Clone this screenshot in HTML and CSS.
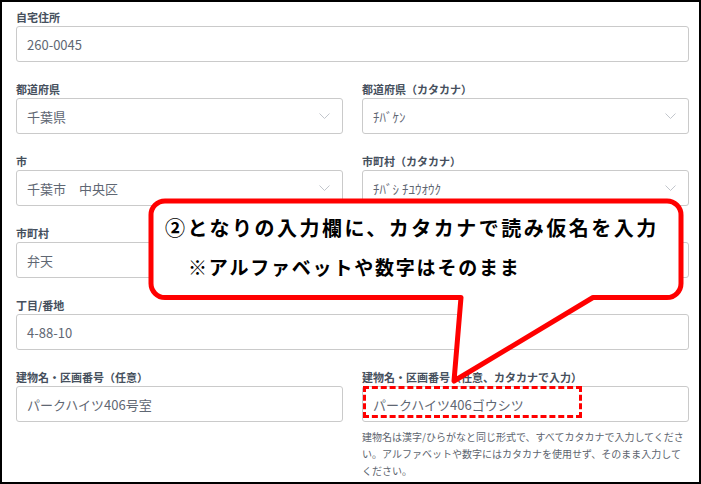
FILE: index.html
```html
<!DOCTYPE html>
<html lang="ja">
<head>
<meta charset="utf-8">
<title>住所入力</title>
<link rel="stylesheet" href="styles.css">
</head>
<body>
<div class="frame">
  <form class="form">
    <div class="field full">
      <div class="label">自宅住所</div>
      <div class="input">260-0045</div>
    </div>
    <div class="field">
      <div class="label">都道府県</div>
      <div class="input select">千葉県<svg class="chev" width="11" height="6" viewBox="0 0 11 6"><polyline points="0.5,0.5 5.5,5.5 10.5,0.5"/></svg></div>
    </div>
    <div class="field">
      <div class="label">都道府県（カタカナ）</div>
      <div class="input select">ﾁﾊﾞｹﾝ<svg class="chev" width="11" height="6" viewBox="0 0 11 6"><polyline points="0.5,0.5 5.5,5.5 10.5,0.5"/></svg></div>
    </div>
    <div class="field">
      <div class="label">市</div>
      <div class="input select">千葉市　中央区<svg class="chev" width="11" height="6" viewBox="0 0 11 6"><polyline points="0.5,0.5 5.5,5.5 10.5,0.5"/></svg></div>
    </div>
    <div class="field">
      <div class="label">市町村（カタカナ）</div>
      <div class="input select">ﾁﾊﾞｼ ﾁﾕｳｵｳｸ<svg class="chev" width="11" height="6" viewBox="0 0 11 6"><polyline points="0.5,0.5 5.5,5.5 10.5,0.5"/></svg></div>
    </div>
    <div class="field">
      <div class="label">市町村</div>
      <div class="input">弁天</div>
    </div>
    <div class="field">
      <div class="label">&nbsp;</div>
      <div class="input"></div>
    </div>
    <div class="field full">
      <div class="label">丁目/番地</div>
      <div class="input">4-88-10</div>
    </div>
    <div class="field">
      <div class="label">建物名・区画番号（任意）</div>
      <div class="input">パークハイツ406号室</div>
    </div>
    <div class="field">
      <div class="label">建物名・区画番号（任意、カタカナで入力）</div>
      <div class="input">パークハイツ406ゴウシツ</div>
      <p class="help">建物名は漢字/ひらがなと同じ形式で、すべてカタカナで入力してください。アルファベットや数字にはカタカナを使用せず、そのまま入力してください。</p>
    </div>
  </form>

  <svg class="callout-shape" width="701" height="484" viewBox="0 0 701 484">
    <path d="M165 201 H667 A14 14 0 0 1 681 215 V283.5 A14 14 0 0 1 667 297.5 H593 L454 381 L461 297.5 H165 A14 14 0 0 1 151 283.5 V215 A14 14 0 0 1 165 201 Z"/>
  </svg>
  <div class="callout-text">
    <div class="line1">②となりの入力欄に、カタカナで読み仮名を入力</div>
    <div class="line2">※アルファベットや数字はそのまま</div>
  </div>
  <div class="highlight"></div>
</div>
</body>
</html>
```

FILE: styles.css
```css
html, body {
  margin: 0;
  padding: 0;
  background: #ffffff;
}

.frame {
  position: relative;
  width: 701px;
  height: 484px;
  box-sizing: border-box;
  border: 2px solid #000000;
  overflow: hidden;
  font-family: "Noto Sans CJK JP", "Noto Sans", sans-serif;
}

.form {
  display: grid;
  grid-template-columns: 1fr 1fr;
  column-gap: 19px;
  row-gap: 20px;
  padding: 8px 10px 0 14px;
  margin: 0;
}

.field.full {
  grid-column: 1 / -1;
}

.label {
  font-size: 11px;
  line-height: 14px;
  font-weight: 700;
  color: #46505d;
  margin-bottom: 2px;
  white-space: nowrap;
}

.input {
  display: flex;
  align-items: center;
  height: 36px;
  box-sizing: border-box;
  border: 1px solid #cacaca;
  border-radius: 3px;
  padding: 0 10px;
  font-size: 13px;
  color: #5f6773;
  white-space: nowrap;
}

.chev {
  margin-left: auto;
  margin-right: 2px;
  fill: none;
  stroke: #c2c6cc;
  stroke-width: 1;
}

.help {
  margin: 6px 0 0 0;
  font-size: 10px;
  line-height: 17px;
  color: #5d646e;
}

.callout-shape {
  position: absolute;
  left: -2px;
  top: -2px;
  pointer-events: none;
}

.callout-shape path {
  fill: #ffffff;
  stroke: #ff0000;
  stroke-width: 5;
  stroke-linejoin: round;
}

.callout-text {
  position: absolute;
  left: 163px;
  top: 214px;
  display: flex;
  flex-direction: column;
  gap: 15px;
  color: #000000;
  font-weight: 700;
  white-space: nowrap;
}

.line1 {
  font-size: 20px;
  line-height: 24px;
  letter-spacing: 2.5px;
}

.line2 {
  font-size: 19px;
  line-height: 24px;
  letter-spacing: 1.8px;
  padding-left: 23px;
}

.highlight {
  position: absolute;
  left: 361px;
  top: 384px;
  width: 219px;
  height: 32px;
  box-sizing: border-box;
  border: 3px dashed #ff0000;
}
```
